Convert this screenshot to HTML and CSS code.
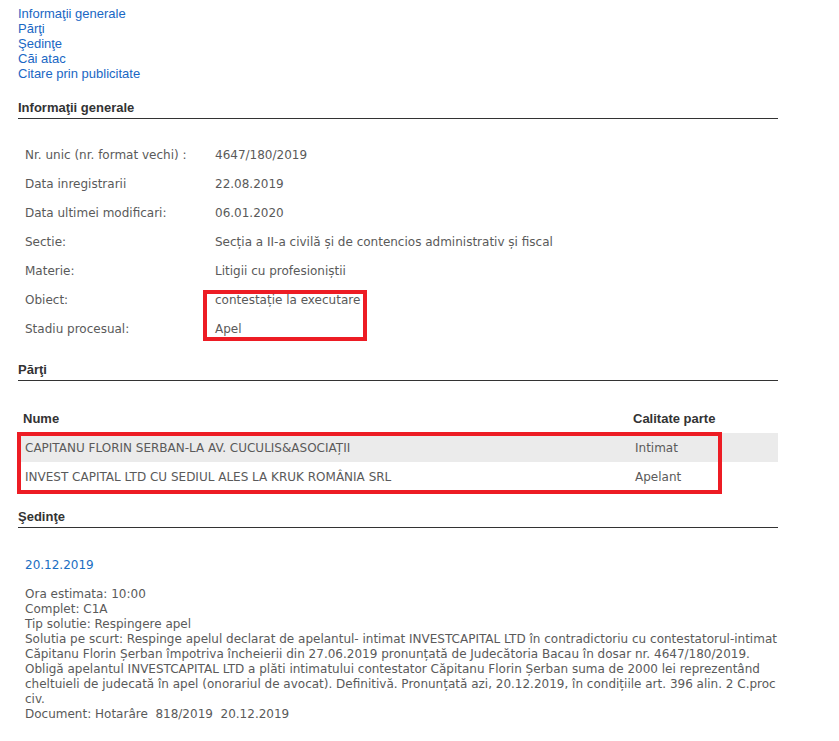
FILE: index.html
```html
<!DOCTYPE html>
<html lang="ro">
<head>
<meta charset="utf-8">
<title>Dosar</title>
<link rel="stylesheet" href="styles.css">
</head>
<body>
<div class="page">
  <nav class="nav">
    <a href="#">Informaţii generale</a>
    <a href="#">Părţi</a>
    <a href="#">Şedinţe</a>
    <a href="#">Căi atac</a>
    <a href="#">Citare prin publicitate</a>
  </nav>

  <h2 class="section-title">Informaţii generale</h2>
  <table class="info">
    <tr><td class="lbl">Nr. unic (nr. format vechi) :</td><td>4647/180/2019</td></tr>
    <tr><td class="lbl">Data inregistrarii</td><td>22.08.2019</td></tr>
    <tr><td class="lbl">Data ultimei modificari:</td><td>06.01.2020</td></tr>
    <tr><td class="lbl">Sectie:</td><td>Secția a II-a civilă și de contencios administrativ și fiscal</td></tr>
    <tr><td class="lbl">Materie:</td><td>Litigii cu profesioniștii</td></tr>
    <tr><td class="lbl">Obiect:</td><td>contestație la executare</td></tr>
    <tr><td class="lbl">Stadiu procesual:</td><td>Apel</td></tr>
  </table>

  <h2 class="section-title parti-title">Părţi</h2>
  <table class="parti">
    <thead>
      <tr><th class="c-name">Nume</th><th class="c-cal">Calitate parte</th></tr>
    </thead>
    <tbody>
      <tr class="alt"><td>CAPITANU FLORIN SERBAN-LA AV. CUCULIS&amp;ASOCIAȚII</td><td>Intimat</td></tr>
      <tr><td>INVEST CAPITAL LTD CU SEDIUL ALES LA KRUK ROMÂNIA SRL</td><td>Apelant</td></tr>
    </tbody>
  </table>

  <h2 class="section-title sed-title">Şedinţe</h2>
  <div class="sedinta">
    <div class="date">20.12.2019</div>
    <div class="details">Ora estimata: 10:00<br>
Complet: C1A<br>
Tip solutie: Respingere apel<br>
Solutia pe scurt: Respinge apelul declarat de apelantul- intimat INVESTCAPITAL LTD în contradictoriu cu contestatorul-intimat Căpitanu Florin Șerban împotriva încheierii din 27.06.2019 pronunțată de Judecătoria Bacau în dosar nr. 4647/180/2019.<br>
Obligă apelantul INVESTCAPITAL LTD a plăti intimatului contestator Căpitanu Florin Șerban suma de 2000 lei reprezentând cheltuieli de judecată în apel (onorariul de avocat). Definitivă. Pronunțată azi, 20.12.2019, în condițiile art. 396 alin. 2 C.proc civ.<br>
Document: Hotarâre&nbsp; 818/2019&nbsp; 20.12.2019</div>
  </div>

  <div class="mark mark-obiect"></div>
  <div class="mark mark-parti"></div>
</div>
</body>
</html>
```

FILE: styles.css
```css
html, body {
  margin: 0;
  padding: 0;
  background: #ffffff;
}

.page {
  position: relative;
  width: 760px;
  padding: 6px 0 0 18px;
  font-family: "Liberation Sans", Arial, sans-serif;
  font-size: 13px;
  color: #333333;
}

.nav {
  display: flex;
  flex-direction: column;
  align-items: flex-start;
}

.nav a {
  color: #1a67c4;
  text-decoration: none;
  line-height: 15px;
}

.section-title {
  margin: 19px 0 0 0;
  padding: 0 0 3px 0;
  font-size: 13px;
  font-weight: bold;
  line-height: 15px;
  color: #333333;
  border-bottom: 1px solid #333333;
}

.info {
  border-collapse: collapse;
  margin-top: 21px;
  font-family: "DejaVu Sans", Verdana, sans-serif;
  font-size: 12px;
  color: #5a5a5a;
}

.info td {
  height: 29px;
  padding: 0;
  vertical-align: middle;
  white-space: nowrap;
}

.info td.lbl {
  width: 190px;
  padding-left: 7px;
}

.parti-title {
  margin-top: 19px;
}

.parti {
  width: 760px;
  border-collapse: collapse;
  margin-top: 22px;
  font-family: "DejaVu Sans", Verdana, sans-serif;
  font-size: 12px;
  color: #5a5a5a;
}

.parti th {
  font-family: "Liberation Sans", Arial, sans-serif;
  font-size: 13px;
  font-weight: bold;
  color: #333333;
  text-align: left;
  height: 30px;
  padding: 0;
  vertical-align: middle;
}

.parti th.c-name {
  padding-left: 5px;
}

.parti th.c-cal {
  width: 145px;
}

.parti td {
  height: 29px;
  padding: 0;
  vertical-align: middle;
}

.parti td:first-child {
  padding-left: 7px;
}

.parti td:last-child {
  padding-left: 2px;
}

.parti tr.alt td {
  background: #ebebeb;
}

.sed-title {
  margin-top: 18px;
}

.sedinta {
  padding-left: 7px;
  font-family: "DejaVu Sans", Verdana, sans-serif;
  font-size: 12px;
  color: #5a5a5a;
}

.date {
  margin-top: 30px;
  line-height: 15px;
  color: #1a6ec2;
}

.details {
  margin-top: 14px;
  line-height: 15px;
}

.mark {
  position: absolute;
  border: 4px solid #ed1c24;
  box-sizing: border-box;
}

.mark-obiect {
  left: 203px;
  top: 290px;
  width: 164px;
  height: 51px;
}

.mark-parti {
  left: 17px;
  top: 432px;
  width: 705px;
  height: 62px;
}
```
